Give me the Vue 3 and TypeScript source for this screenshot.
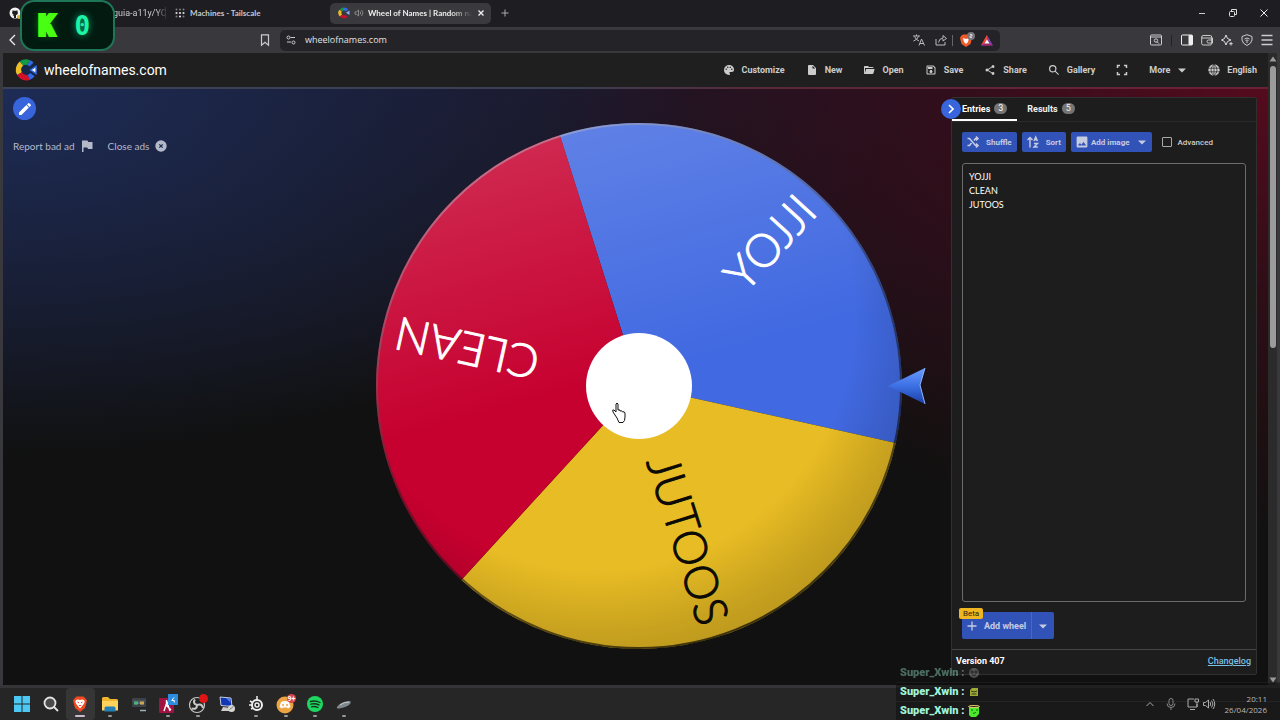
<script setup lang="ts">
import { ref } from 'vue'

interface NavItem { label: string; path: string }

const navItems: NavItem[] = [
  { label: 'Customize', path: 'M17.5,12A1.5,1.5 0 0,1 16,10.5A1.5,1.5 0 0,1 17.5,9A1.5,1.5 0 0,1 19,10.5A1.5,1.5 0 0,1 17.5,12M14.5,8A1.5,1.5 0 0,1 13,6.5A1.5,1.5 0 0,1 14.5,5A1.5,1.5 0 0,1 16,6.5A1.5,1.5 0 0,1 14.5,8M9.5,8A1.5,1.5 0 0,1 8,6.5A1.5,1.5 0 0,1 9.5,5A1.5,1.5 0 0,1 11,6.5A1.5,1.5 0 0,1 9.5,8M6.5,12A1.5,1.5 0 0,1 5,10.5A1.5,1.5 0 0,1 6.5,9A1.5,1.5 0 0,1 8,10.5A1.5,1.5 0 0,1 6.5,12M12,2A10,10 0 0,0 2,12A10,10 0 0,0 12,22A1.5,1.5 0 0,0 13.5,19.5C13.5,19.11 13.35,18.76 13.11,18.5C12.88,18.23 12.73,17.88 12.73,17.5A1.5,1.5 0 0,1 14.23,16H17A5,5 0 0,0 22,11C22,6 17.5,2 12,2Z' },
  { label: 'New', path: 'M13,9V3.5L18.5,9M6,2C4.89,2 4,2.89 4,4V20A2,2 0 0,0 6,22H18A2,2 0 0,0 20,20V8L14,2H6Z' },
  { label: 'Open', path: 'M19,20H4C2.89,20 2,19.1 2,18V6C2,4.89 2.89,4 4,4H10L12,6H19A2,2 0 0,1 21,8H21L4,8V18L6.14,10H23.21L20.93,18.5C20.7,19.37 19.92,20 19,20Z' },
  { label: 'Save', path: 'M17 3H5C3.89 3 3 3.9 3 5V19C3 20.1 3.89 21 5 21H19C20.1 21 21 20.1 21 19V7L17 3M19 19H5V5H16.17L19 7.83V19M12 12C10.34 12 9 13.34 9 15S10.34 18 12 18 15 16.66 15 15 13.66 12 12 12M6 6H15V10H6V6Z' },
  { label: 'Share', path: 'M18,16.08C17.24,16.08 16.56,16.38 16.04,16.85L8.91,12.7C8.96,12.47 9,12.24 9,12C9,11.76 8.96,11.53 8.91,11.3L15.96,7.19C16.5,7.69 17.21,8 18,8A3,3 0 0,0 21,5A3,3 0 0,0 18,2A3,3 0 0,0 15,5C15,5.24 15.04,5.47 15.09,5.7L8.04,9.81C7.5,9.31 6.79,9 6,9A3,3 0 0,0 3,12A3,3 0 0,0 6,15C6.79,15 7.5,14.69 8.04,14.19L15.16,18.34C15.11,18.55 15.08,18.77 15.08,19C15.08,20.61 16.39,21.91 18,21.91C19.61,21.91 20.92,20.61 20.92,19A2.92,2.92 0 0,0 18,16.08Z' },
  { label: 'Gallery', path: 'M9.5,2A7.5,7.5 0 0,1 17,9.5C17,11.11 16.41,12.79 15.44,13.93L22,20.5L20.5,22L13.93,15.44C12.79,16.41 11.11,17 9.5,17A7.5,7.5 0 0,1 2,9.5A7.5,7.5 0 0,1 9.5,2M9.5,4.4A5.1,5.1 0 0,0 4.4,9.5A5.1,5.1 0 0,0 9.5,14.6A5.1,5.1 0 0,0 14.6,9.5A5.1,5.1 0 0,0 9.5,4.4Z' }
]

const entries = ref('YOJJI\nCLEAN\nJUTOOS')
const advanced = ref(false)

interface Slice { name: string; angle: number; fill: string; ink: string }
const slices: Slice[] = [
  { name: 'YOJJI', angle: -47.5, fill: '#4169e1', ink: '#ffffff' },
  { name: 'JUTOOS', angle: 72.5, fill: '#e8bc24', ink: '#0b0a05' },
  { name: 'CLEAN', angle: 192.5, fill: '#c6002f', ink: '#ffffff' }
]
const radius = 263
const wedge = (mid: number): string => {
  const at = (deg: number) => {
    const a = (deg * Math.PI) / 180
    return `${(Math.cos(a) * radius).toFixed(2)} ${(Math.sin(a) * radius).toFixed(2)}`
  }
  return `M0 0L${at(mid - 60)}A${radius} ${radius} 0 0 1 ${at(mid + 60)}Z`
}

const chat = ['faded', 'mid', 'latest']
</script>

<template>
  <div class="screen">
    <header class="tabstrip">
      <div class="tab tab-left">
        <svg class="i12" viewBox="0 0 12 12"><circle cx="6" cy="6" r="5.5" fill="#f2f2f2" /><path d="M3.6 3.2 5 3.8h2l1.4-.6.2 1.6c.8 2-.2 3-1.6 3.2V11H5V9L3.6 8.4 5 8C3.6 7.6 2.7 6.4 3.4 4.8Z" fill="#1e1d22" /><circle cx="10" cy="10" r="2" fill="#e3b325" /></svg>
        <span class="tabtext fade dim">guia-a11y/YC</span>
      </div>
      <div class="tab tab-mid">
        <svg class="i10" viewBox="0 0 10 10" fill="#ddd"><circle cx="1.5" cy="1.5" r="1" opacity=".5" /><circle cx="5" cy="1.5" r="1" opacity=".5" /><circle cx="8.5" cy="1.5" r="1" opacity=".5" /><circle cx="1.5" cy="5" r="1.1" /><circle cx="5" cy="5" r="1.1" /><circle cx="8.5" cy="5" r="1.1" /><circle cx="1.5" cy="8.5" r="1" opacity=".5" /><circle cx="5" cy="8.5" r="1.1" /><circle cx="8.5" cy="8.5" r="1" opacity=".5" /></svg>
        <span class="tabtext">Machines - Tailscale</span>
      </div>
      <div class="tab tab-active">
        <svg class="i12" viewBox="0 0 24 24" fill="none" stroke-width="6"><path d="M12 4A8 8 0 0 0 6 6.5" stroke="#159a3f" /><path d="M5 7A8 8 0 0 0 6 17" stroke="#e8bc24" /><path d="M6 17A8 8 0 0 0 17 18" stroke="#c8102e" /><path d="M12 4A8 8 0 0 1 18 7" stroke="#3369e8" /><path d="M23 7v9l-7-4.5Z" fill="#8fb0ff" /></svg>
        <svg class="i10 sound" viewBox="0 0 10 10" fill="none" stroke="#999" stroke-width=".8"><path d="M1 3.8h1.5L4.5 2v6L2.5 6.2H1ZM6 3.5q1.5 1.5 0 3M7.5 2q3 3 0 6" /></svg>
        <span class="tabtext fade bright">Wheel of Names | Random na</span>
        <button class="plain" aria-label="Close tab"><svg class="i10" viewBox="0 0 10 10" stroke="#eee" stroke-width="1.4"><path d="m2.5 2.5 5 5m0-5-5 5" /></svg></button>
      </div>
      <button class="plain newtab" aria-label="New tab"><svg class="i10" viewBox="0 0 10 10" stroke="#aaa"><path d="M5 1.5v7M1.5 5h7" /></svg></button>
      <div class="window-buttons">
        <button class="plain" aria-label="Minimize"><svg class="i10" viewBox="0 0 10 10" stroke="#ccc"><path d="M2 5.5h6" /></svg></button>
        <button class="plain" aria-label="Restore"><svg class="i10" viewBox="0 0 10 10" stroke="#ddd" fill="none"><rect x="1.5" y="3.5" width="5" height="5" rx="1" /><path d="M3.5 3V1.5H8.5V6.5H7" /></svg></button>
        <button class="plain" aria-label="Close window"><svg class="i10" viewBox="0 0 10 10" stroke="#eee"><path d="m1.500 1.500 7 7m0-7-7 7" /></svg></button>
      </div>
    </header>

    <div class="toolbar">
      <div class="tool-left">
        <button class="plain" aria-label="Back"><svg class="i12" viewBox="0 0 12 12" fill="none" stroke="#eee" stroke-width="1.3"><path d="M8 1 3 6l5 5" /></svg></button>
        <button class="plain" aria-label="Bookmark"><svg class="i12" viewBox="0 0 12 12" fill="none" stroke="#ccc" stroke-width="1.2"><path d="M2.5.8h7v10.4L6 8.200l-3.500 3Z" /></svg></button>
      </div>
      <div class="address">
        <svg class="i10" viewBox="0 0 10 10" fill="none" stroke="#ccc"><circle cx="2.5" cy="2.5" r="1.5" /><path d="M4.5 2.5H9M1 7h4" /><circle cx="7.5" cy="7.5" r="1.5" /></svg>
        <input class="url" value="wheelofnames.com" aria-label="Address" />
        <svg class="i12 translate" viewBox="0 0 12 12" fill="none" stroke="#bbb"><path d="M0 2h7M3.5.5V2M1.5 2.5Q3 6 6 7M5.5 2.5Q4 6 .5 7M6 11.5 8.5 5 11.5 11.5M7 9.5h3.5" /></svg>
        <svg class="i12 share" viewBox="0 0 12 12" fill="none" stroke="#bbb"><path d="M1 5v6h9V8M3.5 8.5Q4 4.5 8 4V1.5L11.5 4.5 8 7V5" /></svg>
        <span class="bar"></span>
        <svg class="i16" viewBox="0 0 16 16"><path d="M2 4 4 2.500h6L12 4l1 2-1.500 6L7 15 2.500 12 1 6Z" fill="#ef5a29" /><path d="m4 6 3 1 3-1-1 4-2 2-2-2Z" fill="#fff" /><circle cx="12" cy="4" r="4" fill="#77777c" /><path d="M11 2.500h2v1.500h-2v1.500h2" fill="none" stroke="#eee" stroke-width=".8" /></svg>
        <svg class="i12 bat" viewBox="0 0 12 12"><path d="M6 1 12 11.500H0Z" fill="#7d42a7" /><path d="M6 1 0 11.500 6 7Z" fill="#ff4724" /><path d="M0 11.500h12L6 8.500Z" fill="#a3245f" /><path d="m6 5.500 2.500 4h-5Z" fill="#fff" /></svg>
      </div>
      <div class="tool-right">
        <svg class="i12" viewBox="0 0 12 12" fill="none" stroke="#ccc"><rect x=".5" y="1" width="11" height="10" rx="1" /><path d="M.5 3h11" /><circle cx="6" cy="6.5" r="1.7" /><path d="m7 7.700 2 2" /></svg>
        <span class="bar dark"></span>
        <svg class="i12" viewBox="0 0 12 12" fill="none" stroke="#eee"><rect x=".5" y="1" width="11" height="10" rx="1" /><path d="M8 1.500h3v9H8Z" fill="#eee" /></svg>
        <svg class="i12" viewBox="0 0 12 12" fill="none" stroke="#ccc"><rect x=".7" y="1.5" width="10" height="9.5" rx="1.5" /><path d="M1 4h10.500v5H7.500a1.500 1.500 0 0 1 0-3h4" /></svg>
        <svg class="i12" viewBox="0 0 12 12" fill="none" stroke="#ddd"><path d="M5 1 6.500 4.500 10 6 6.500 7.500 5 11 3.500 7.500.500 6l3-1.500ZM10 8v3.500M8.200 9.700h3.500" /></svg>
        <svg class="i12" viewBox="0 0 12 12" fill="none" stroke="#ccc"><path d="m6 .700 5 1.800V6Q10.500 9.500 6 11.500 1.500 9.500 1 6V2.500ZM3.500 5q2.500-2 5 0M4.500 6.500q1.500-1 3 0M6 7v2" /></svg>
        <svg class="i12" viewBox="0 0 12 12" stroke="#ccc" stroke-width="1.3"><path d="M.5 1.500h11M.5 6h11M.5 10.500h11" /></svg>
      </div>
    </div>

    <div class="viewport">
      <div class="page">
        <header class="site-header">
          <a href="#" class="brand">
            <svg class="logo" viewBox="0 0 24 24" fill="none"><circle cx="12" cy="12" r="11.5" fill="#14284a" /><g stroke-width="6"><path d="M7 5A8.500 8.500 0 0 1 15 4" stroke="#149944" /><path d="M15 4A8.500 8.500 0 0 1 18 6" stroke="#3369e8" /><path d="M7 5A8.500 8.500 0 0 0 5 16" stroke="#edbe25" /><path d="M5 16A8.500 8.500 0 0 0 15 20" stroke="#d50f25" /><path d="M15 20A8.500 8.500 0 0 0 19 17" stroke="#3369e8" /></g><circle cx="12" cy="12" r="4" fill="#14284a" /><path d="M23 8v8l-6-4Z" fill="#f4f8ff" stroke="#3369e8" stroke-width="1.5" /></svg>
            <span>wheelofnames.com</span>
          </a>
          <nav class="nav">
            <button v-for="item in navItems" :key="item.label" class="nav-item">
              <svg class="i12" viewBox="0 0 24 24" fill="currentColor"><path :d="item.path" /></svg><span>{{ item.label }}</span>
            </button>
            <button class="nav-item" aria-label="Fullscreen"><svg class="i12" viewBox="0 0 12 12" fill="none" stroke="currentColor" stroke-width="1.5"><path d="M1.500 4V1.500H4M8 1.500h2.500V4M10.500 8v2.500H8M4 10.500H1.500V8" /></svg></button>
            <button class="nav-item"><span>More</span><svg class="i10" viewBox="0 0 10 10" fill="currentColor"><path d="M1 3.500h8L5 7.500Z" /></svg></button>
            <button class="nav-item"><svg class="i12" viewBox="0 0 12 12"><circle cx="6" cy="6" r="5.7" fill="currentColor" /><path d="M0 4.200h12M0 7.800h12M6 0v12M6 0Q0 6 6 12M6 0q6 6 0 12" fill="none" stroke="#1f1f1f" stroke-width=".7" /></svg><span>English</span></button>
          </nav>
        </header>

        <main class="stage">
          <div class="side">
            <button class="edit" aria-label="Edit"><svg class="i16" viewBox="0 0 24 24" fill="#fff"><path d="M20.710,7.040C21.100,6.650 21.100,6 20.710,5.630L18.370,3.290C18,2.900 17.350,2.900 16.960,3.290L15.120,5.120L18.870,8.870M3,17.250V21H6.750L17.810,9.930L14.060,6.180L3,17.250Z" /></svg></button>
            <div class="ad-links">
              <button class="ad">Report bad ad <svg class="i12" viewBox="0 0 12 12" fill="currentColor"><path d="M1 .500h5.500l.700 1.500H11.500v7H7L6.300 7.500H2.500V12H1Z" /></svg></button>
              <button class="ad">Close ads <svg class="i12" viewBox="0 0 12 12"><circle cx="6" cy="6" r="5.7" fill="currentColor" /><path d="m4.300 4.300 3.400 3.400m0-3.400L4.300 7.700" stroke="#1c294c" stroke-width="1.2" /></svg></button>
            </div>
          </div>

          <svg class="wheel" viewBox="-264 -264 552 528" role="img" aria-label="Wheel of names">
            <defs>
              <linearGradient id="shine" x1=".3" y1="0" x2=".44" y2=".5"><stop offset="0" stop-color="#fff" stop-opacity=".17" /><stop offset="1" stop-color="#fff" stop-opacity="0" /></linearGradient>
              <radialGradient id="shade" cx=".42" cy=".36" r=".68"><stop offset=".72" stop-color="#000" stop-opacity="0" /><stop offset=".9" stop-color="#000" stop-opacity=".14" /><stop offset="1" stop-color="#000" stop-opacity=".2" /></radialGradient>
              <linearGradient id="rim" x1=".2" y1="0" x2=".7" y2="1"><stop offset="0" stop-color="#d0d0e0" stop-opacity=".5" /><stop offset=".5" stop-color="#222" stop-opacity=".5" /><stop offset="1" stop-color="#000" stop-opacity=".7" /></linearGradient>
              <linearGradient id="arrow" x1="0" y1="0" x2="0" y2="1"><stop offset="0" stop-color="#6b9cff" /><stop offset=".5" stop-color="#3c70e3" /><stop offset="1" stop-color="#1c3fa5" /></linearGradient>
            </defs>
            <path v-for="s in slices" :key="s.name" :d="wedge(s.angle)" :fill="s.fill" />
            <circle r="263" fill="url(#shine)" />
            <circle r="263" fill="url(#shade)" />
            <circle r="262" fill="none" stroke="url(#rim)" stroke-width="2" />
            <text v-for="s in slices" :key="s.name + 't'" x="249" y="16" text-anchor="end" :fill="s.ink" :stroke="s.ink" :transform="`rotate(${s.angle})`" class="slice-name">{{ s.name }}</text>
            <circle r="53" fill="#fff" />
            <path d="M249 0 286-18 281-1 286 18Z" fill="url(#arrow)" />
            <path d="M286-18 281-1 286 18" fill="none" stroke="#8db7ff" stroke-width="1" />
            <path d="M-22 32l-4-6q-1-3 1-2l2 2V18q1-2 2 0v6q2-1 2 1 2-1 2.500 1 2-1 2.500 1v4q0 4-2 5.500h-4Z" fill="#fff" stroke="#111" stroke-width="1" stroke-linejoin="round" />
          </svg>

          <aside class="panel">
            <button class="collapse" aria-label="Collapse panel"><svg class="i12" viewBox="0 0 12 12" fill="none" stroke="#fff" stroke-width="1.7"><path d="m4 2 4 4-4 4" /></svg></button>
            <div class="panel-tabs" role="tablist">
              <button class="ptab on" role="tab" aria-selected="true">Entries <span class="count">3</span></button>
              <button class="ptab" role="tab" aria-selected="false">Results <span class="count">5</span></button>
            </div>
            <div class="panel-body">
              <div class="actions">
                <button class="btn"><svg class="i12" viewBox="0 0 12 12" fill="none" stroke="currentColor" stroke-width="1.5"><path d="M.500 2.500H2.500L8.500 9.500H11M.500 9.500H2.500l2-2.500M7 4.500l1.500-2H11M9 .500l2 2-2 2M9 7.500l2 2-2 2" /></svg><span>Shuffle</span></button>
                <button class="btn"><svg class="i12" viewBox="0 0 12 12" fill="none" stroke="currentColor" stroke-width="1.4"><path d="M3 11.500V2M.500 4 3 1.500 5.500 4M7 5l1.700-4L10.500 5M7.500 3.700H10M7 7.500h3.500L7 11h3.800" /></svg><span>Sort</span></button>
                <button class="btn image"><svg class="i12" viewBox="2 2 20 20" fill="currentColor"><path d="M8.500,13.500L11,16.500L14.500,12L19,18H5M21,19V5C21,3.890 20.100,3 19,3H5A2,2 0 0,0 3,5V19A2,2 0 0,0 5,21H19A2,2 0 0,0 21,19Z" /></svg><span>Add image</span><svg class="i10 caret" viewBox="0 0 10 10" fill="currentColor"><path d="M1 3.500h8L5 7.500Z" /></svg></button>
                <label class="check"><input v-model="advanced" type="checkbox" />Advanced</label>
              </div>
              <textarea v-model="entries" class="entries" aria-label="Entries" spellcheck="false"></textarea>
              <div class="add">
                <span class="beta">Beta</span>
                <button class="btn big"><svg class="i10" viewBox="0 0 10 10" stroke="currentColor" stroke-width="1.3"><path d="M5 .500v9M.500 5h9" /></svg><span>Add wheel</span></button>
                <button class="btn big drop" aria-label="More wheel options"><svg class="i10" viewBox="0 0 10 10" fill="currentColor"><path d="M1 3.500h8L5 7.500Z" /></svg></button>
              </div>
            </div>
            <footer class="panel-foot"><span>Version 407</span><a href="#">Changelog</a></footer>
          </aside>
        </main>
      </div>
      <div class="scroll">
        <svg class="i8" viewBox="0 0 8 8" fill="#9a9a9a"><path d="M4 1.500 7.500 6.500H.500Z" /></svg>
        <span class="thumb"></span>
        <svg class="i8" viewBox="0 0 8 8" fill="#9a9a9a"><path d="M4 6.500 7.500 1.500H.500Z" /></svg>
      </div>
    </div>

    <footer class="taskbar">
      <div class="apps">
        <button class="app" aria-label="Start"><svg class="i16" viewBox="0 0 16 16" fill="#4cc8f4"><path d="M0 0h7.500v7.500H0ZM8.500 0H16v7.500H8.500ZM0 8.500h7.500V16H0ZM8.500 8.500H16V16H8.500Z" /></svg></button>
        <button class="app" aria-label="Search"><svg class="i16" viewBox="0 0 16 16" fill="#4a4a4a" stroke="#e4e4e4" stroke-width="1.8"><circle cx="7" cy="7" r="5.5" /><path d="m11 11 4 4" /></svg></button>
        <button class="app current" aria-label="Brave"><svg class="i16" viewBox="0 0 16 16"><path d="m2.500 2.500 2-2h7l2 2 1.500 2-2 7.500L8 16l-5-4L1 4.500Z" fill="#f04a22" /><path d="m4 4 2-.5 2 .5 2-.5 2 .5.800 2L11 9l-3 3.500L5 9 3.200 6Z" fill="#fff" /><path d="m5.500 6 1.500 1m3.500-1L9 7M7 9.500h2" stroke="#f04a22" /></svg></button>
        <button class="app open" aria-label="File explorer"><svg class="i16" viewBox="0 0 16 16"><path d="M0 2.500Q0 1 1.500 1H6l2 2h6.500Q16 3 16 4.500V14H0Z" fill="#efb52e" /><path d="M0 5h16v9.500H0Z" fill="#ffd35c" /><path d="M4 10.500h8q1.500 0 1.500 1.500v3.500h-11V12q0-1.500 1.500-1.500Z" fill="#247fb8" /></svg></button>
        <button class="app" aria-label="Tools"><svg class="i16" viewBox="0 0 16 16"><rect x="1" y="2" width="14" height="9" rx="1" fill="#3d4248" /><path d="M1.500 5h13M3 7.500q2 2 4 0M9 7.500q2 2 4 0" stroke="#59636b" fill="none" /><path d="M3 5.500h4v3H3Z" fill="#50b17a" /><path d="M9 5.500h4v3H9Z" fill="#c9a850" /><path d="M7 7h2" stroke="#6595de" /><path d="M9 14.500h6" stroke="#9db0b5" stroke-width="1.5" /></svg></button>
        <button class="app open" aria-label="Launcher"><svg class="i20" viewBox="0 0 20 20"><rect x="1" y="4" width="15" height="15" rx="1" fill="#a0123f" /><path d="M8.500 6v4M6 17l3-9 3 9M8 11l5 5" fill="none" stroke="#fff" stroke-width="1.4" /><rect x="10" y="0" width="10" height="11" fill="#2a8de0" /><path d="M16 3.500 13.800 6.500h2.500v2" stroke="#fff" fill="none" /></svg></button>
        <button class="app open" aria-label="OBS"><svg class="i20" viewBox="0 0 20 20"><circle cx="9" cy="11" r="7.5" fill="#242424" stroke="#c9c9c9" stroke-width="1.2" /><path d="M9 11Q4 9 7 5.500M9 11q5-2 6 3M9 11q0 5-5.500 3.500" fill="none" stroke="#c9c9c9" stroke-width="2" /><circle cx="15.5" cy="4.5" r="4.5" fill="#df1414" /></svg></button>
        <button class="app" aria-label="Remote desktop"><svg class="i16" viewBox="0 0 16 16"><path d="m1 1 11 1 1 8.500-11-1Z" fill="#1237b6" stroke="#c3ccd8" /><path d="m7 2 4 .500.500 4Z" fill="#5c87f2" /><path d="m4 11-2 4h9v-3Z" fill="#ccc" /><circle cx="12.5" cy="12.5" r="3.5" fill="#d7d7d0" /><path d="m10.500 13.500 4-3" stroke="#777" /></svg></button>
        <button class="app open" aria-label="SteelSeries"><svg class="i16" viewBox="0 0 16 16" fill="none" stroke="#eee"><circle cx="9" cy="9" r="5" stroke-width="2" /><circle cx="9" cy="9" r="2" stroke-width="1.5" /><path d="M9 0v4M1 9h3M2 5l2.500 1.500M3 13l2-1" stroke-width="1.5" /></svg></button>
        <button class="app open" aria-label="Discord"><svg class="i20" viewBox="0 0 20 20"><circle cx="9" cy="11" r="8.5" fill="#eda340" /><path d="M5 8q4-2 8 0l1.500 5-2.500 1.500-1-1H7l-1 1L3.500 13Z" fill="#fff" /><circle cx="7" cy="11" r="1" fill="#eda340" /><circle cx="11" cy="11" r="1" fill="#eda340" /><circle cx="15.5" cy="4.5" r="4.5" fill="#d6474c" /><text x="15.5" y="7" text-anchor="middle" class="tiny">9+</text></svg></button>
        <button class="app open" aria-label="Spotify"><svg class="i16" viewBox="0 0 16 16"><circle cx="8" cy="8" r="8" fill="#1ed760" /><path d="M3.500 5.500q5-1.500 9.500 1M4 8.200q4-1.200 8 .800M4.500 10.800q3.500-1 6.500.700" fill="none" stroke="#16351f" stroke-width="1.4" stroke-linecap="round" /></svg></button>
        <button class="app open" aria-label="Device"><svg class="i16" viewBox="0 0 16 16"><path d="M1 11Q4 6 13 5q3 0 1 3-3 3-11 4.500-3 .500-2-1.500Z" fill="#7f898d" /><path d="M4 9q4-3 9-3" stroke="#c5cccf" fill="none" /></svg></button>
      </div>
      <div class="tray">
        <svg class="i10" viewBox="0 0 10 10" fill="none" stroke="#aaa"><path d="M1.500 7 5 3.500 8.500 7" /></svg>
        <svg class="i12" viewBox="0 0 12 12" fill="none" stroke="#888"><rect x="4" y=".5" width="4" height="7" rx="2" /><path d="M2 5.500q0 4 4 4t4-4M6 9.500V12" /></svg>
        <svg class="i12 net" viewBox="0 0 12 12" fill="none" stroke="#aaa"><path d="M7 1H1v8h9V6M3 11.500h5M8 1h3.500v3h-3.500ZM10 4v5" /></svg>
        <svg class="i12" viewBox="0 0 12 12" fill="none" stroke="#aaa"><path d="M.500 4.500H2.500L5.500 2v8L2.500 7.500h-2ZM7 4q1.500 2 0 4M8.500 2.500q3 3.500 0 7M10 1q3.500 5 0 10" /></svg>
        <div class="clock"><span>20:11</span><span>26/04/2026</span></div>
      </div>
    </footer>

    <div class="points"><span class="k">K</span><span class="zero">0</span></div>

    <div class="chat">
      <div v-for="kind in chat" :key="kind" :class="['chat-row', kind]">
        <span><b>Super_Xwin</b> :</span>
        <svg v-if="kind === 'faded'" class="i12" viewBox="0 0 12 12"><circle cx="6" cy="6" r="5" fill="#a8a8a8" /><path d="M3 4h2v2H3ZM7 4h2v2H7ZM4 8h4" stroke="#333" fill="none" /></svg>
        <svg v-else-if="kind === 'mid'" class="i12" viewBox="0 0 12 12"><path d="M2 4 4 2h6v8H2Z" fill="#9dab34" /><path d="m3 5 3 1 3-1M3.500 8h5" stroke="#3b3f18" fill="none" /></svg>
        <svg v-else class="i12" viewBox="0 0 12 12"><path d="M1 2h10v7l-3 3H3L1 10Z" fill="#4ce82e" /><ellipse cx="6" cy="1.5" rx="5.5" ry="1" fill="none" stroke="#e7c66b" /><path d="M3 5h2M8 5h2M5 8q2 1 3-1" stroke="#16661a" fill="none" /></svg>
      </div>
    </div>
  </div>
</template>

<style>
html, body { margin: 0; background: #262626; }
</style>

<style scoped>
* { box-sizing: border-box; }
.screen { position: relative; display: flex; flex-direction: column; min-height: 100vh; overflow: hidden; color: #fff; font-family: Roboto, "Liberation Sans", sans-serif; font-size: 10px; background: #39393d; }
button { font: inherit; color: inherit; border: 0; background: none; padding: 0; margin: 0; display: flex; align-items: center; cursor: pointer; }
svg { display: block; flex: none; overflow: visible; }
.i8 { width: 8px; height: 8px; }
.i10 { width: 10px; height: 10px; }
.i12 { width: 12px; height: 12px; }
.i16 { width: 16px; height: 16px; }
.i20 { width: 20px; height: 20px; }

.tabstrip { display: flex; align-items: center; height: 27px; padding-bottom: 1px; background: #1e1d22; }
.tab { display: flex; align-items: center; height: 21px; }
.tab-left { width: 166px; padding-left: 9px; gap: 92px; border-right: 1px solid #333338; height: 12px; }
.tab-mid { width: 164px; padding-left: 9px; gap: 5px; }
.tab-active { width: 161px; padding: 0 5px 0 8px; gap: 4px; background: #3a3a3e; border-radius: 5px; }
.tabtext { font: 9px/12px Roboto, "Noto Sans", sans-serif; white-space: nowrap; color: #c8c8cc; }
.tab-mid .tabtext, .tab-active .tabtext { font: 700 8px/12px Lato, "Noto Sans", sans-serif; }
.tabtext.bright { color: #eee; flex: 1; min-width: 0; }
.fade { mask-image: linear-gradient(to right, #000 80%, transparent); }
.newtab { margin-left: 9px; }
.window-buttons { margin-left: auto; display: flex; gap: 21px; padding-right: 11px; }

.toolbar { display: flex; align-items: center; height: 26px; background: #39393d; }
.tool-left { width: 280px; display: flex; justify-content: space-between; padding: 0 9px 0 7px; }
.address { flex: 1; display: flex; align-items: center; height: 21px; padding: 0 7px 0 6px; background: #242428; border-radius: 5px; }
.url { flex: 1; min-width: 0; border: 0; background: none; padding: 0 0 0 9px; outline: 0; color: #e2e2e4; font: 9px/14px "Open Sans", "Noto Sans", sans-serif; }
.translate { margin-right: 10px; }
.share { margin-right: 5px; }
.bar { width: 1px; height: 11px; margin-right: 6px; background: #66666a; }
.bar.dark { background: #222; margin: 0 1px; }
.bat { margin-left: 6px; }
.tool-right { width: 280px; display: flex; align-items: center; justify-content: flex-end; gap: 8px; padding-right: 7px; }

.viewport { flex: 1; display: flex; padding: 0 3px; }
.page { flex: 1; display: flex; flex-direction: column; min-width: 0; background: #111; }
.scroll { width: 9px; display: flex; flex-direction: column; align-items: center; padding: 2px 0 1px; background: #2b2b2b; }
.scroll .thumb { width: 6px; height: 282px; margin: 3px 0 auto; border-radius: 3px; background: #9b9b9b; }

.site-header { display: flex; align-items: center; justify-content: space-between; height: 36px; padding: 0 11px 0 12px; background: #1f1f1f; border-bottom: 2px solid; border-image: linear-gradient(to right, #3c4258, #3a3f52 45%, #5a2838 60%, #6c2036) 1; }
.brand { display: flex; align-items: center; gap: 7px; color: #fff; text-decoration: none; font-size: 14px; line-height: 20px; }
.logo { width: 22px; height: 22px; }
.nav { display: flex; align-items: center; gap: 21px; }
.nav-item { gap: 7px; color: #ccc; font-size: 9px; font-weight: 700; line-height: 14px; }

.stage { flex: 1; display: flex; align-items: flex-start; padding: 8px 11px 10px 10px; background: radial-gradient(ellipse 55% 62% at 0 0, #1d2c56, rgba(26, 40, 76, 0.6) 50%, transparent), radial-gradient(ellipse 58% 75% at 100% 0, #540b1d, rgba(60, 10, 22, 0.65) 45%, transparent), linear-gradient(#1c1626, #111 55%); }
.side { flex: 1; min-width: 0; }
.edit { width: 23px; height: 23px; justify-content: center; border-radius: 50%; background: #3864dc; }
.ad-links { display: flex; gap: 15px; margin-top: 18px; }
.ad { gap: 6px; color: #b4b9ca; font: 10px/16px Lato, "Open Sans", sans-serif; white-space: nowrap; }
.wheel { flex: 0 1 552px; width: 552px; min-width: 0; margin: 25px 24px 0 0; }
.slice-name { font: 300 46px Lato, "Open Sans", sans-serif; stroke-width: 1px; stroke-linejoin: round; }

.panel { position: relative; flex: none; width: 306px; align-self: stretch; display: flex; flex-direction: column; background: #1d1d1d; border: 1px solid #303030; border-radius: 2px; }
.collapse { position: absolute; left: -11px; top: 1px; width: 20px; height: 20px; justify-content: center; border-radius: 50%; background: #3864dc; }
.panel-tabs { display: flex; height: 24px; border-bottom: 1px solid #2b2b2b; }
.ptab { height: 23px; padding: 0 10px; gap: 4px; font-size: 9px; font-weight: 700; color: #eee; border-bottom: 2px solid transparent; }
.ptab.on { color: #fff; border-color: #fff; }
.count { min-width: 13px; height: 11px; padding: 0 3px; border-radius: 6px; background: #747474; font-size: 9px; font-weight: 400; line-height: 11px; text-align: center; }
.panel-body { flex: 1; display: flex; flex-direction: column; padding: 10px; }
.actions { display: flex; align-items: center; gap: 5px; }
.btn { height: 20px; padding: 0 5px; gap: 7px; border-radius: 2px; background: #3153b8; color: #c5cce2; font-size: 8px; font-weight: 700; white-space: nowrap; }
.image { gap: 3px; }
.caret { margin-left: 4px; }
.check { display: flex; align-items: center; gap: 6px; margin-left: 5px; font-size: 8px; font-weight: 500; color: #ccc; }
.check input { appearance: none; width: 10px; height: 10px; margin: 0; border: 1px solid #aaa; border-radius: 1px; }
.check input:checked { background: #3864dc; }
.entries { flex: 1; width: 100%; margin-top: 11px; padding: 6px; border: 1px solid #6c6c6c; border-radius: 3px; background: #1d1d1d; color: #fff; font: 9px/14px Lato, "Open Sans", sans-serif; resize: none; outline: 0; }
.add { position: relative; display: flex; margin-top: 10px; }
.big { height: 27px; font-size: 9px; border-radius: 2px 0 0 2px; }
.drop { width: 23px; justify-content: center; border-left: 1px solid #4d68b8; border-radius: 0 2px 2px 0; }
.beta { position: absolute; left: -3px; top: -4px; padding: 0 4px; border-radius: 2px; background: #efb622; color: #2c2304; font-size: 8px; line-height: 11px; z-index: 1; }
.panel-foot { display: flex; align-items: center; justify-content: space-between; height: 25px; padding: 0 5px 2px 4px; border-top: 1px solid #474747; font-size: 9px; font-weight: 700; line-height: 14px; }
.panel-foot a { color: #7bc0e4; font-weight: 500; }

.taskbar { display: flex; justify-content: space-between; height: 35px; border-top: 3px solid #353537; background: #262626; }
.apps { display: flex; width: 352px; margin-left: 7px; }
.app { position: relative; flex: 1; justify-content: center; }
.app.current { background: #363636; border-radius: 4px; }
.app.open::after, .app.current::after { content: ""; position: absolute; bottom: 3px; left: 50%; width: 4px; height: 2px; margin-left: -2px; border-radius: 1px; background: #999; }
.app.current::after { width: 10px; margin-left: -5px; background: #c9bcca; }
.tiny { font: 700 7px Roboto, sans-serif; fill: #fff; }
.tray { position: relative; z-index: 1; display: flex; align-items: center; gap: 10px; padding-right: 13px; }
.net { margin-right: -6px; }
.clock { display: flex; flex-direction: column; align-items: flex-end; color: #b8b8b8; font: 8px/11px "Open Sans", "Noto Sans", sans-serif; }

.points { position: absolute; left: 20px; top: 0; width: 95px; height: 51px; display: flex; align-items: center; justify-content: center; gap: 20px; padding-right: 6px; border: 2px solid #1f7557; border-radius: 14px; background: #021a10; }
.k { color: #48ff12; font: 700 26px/28px "DejaVu Sans Mono", monospace; -webkit-text-stroke: 4px #48ff12; text-shadow: 0 0 8px #1b9c1b; }
.zero { color: #1df5a6; font: 700 26px/28px "DejaVu Sans Mono", monospace; text-shadow: 0 0 7px #0fa878; }

.chat { position: absolute; right: 0; bottom: 0; left: 70%; display: flex; flex-direction: column; pointer-events: none; }
.chat-row { display: flex; align-items: center; gap: 4px; height: 19px; padding-left: 4px; background: rgba(12, 12, 12, 0.5); color: #e8f8ef; font-size: 11px; font-weight: 700; line-height: 18px; border-top: 1px solid rgba(80, 80, 80, 0.2); }
.chat-row b { color: #9ff5da; }
.chat-row.faded { opacity: 0.4; background: none; border: 0; }
</style>
